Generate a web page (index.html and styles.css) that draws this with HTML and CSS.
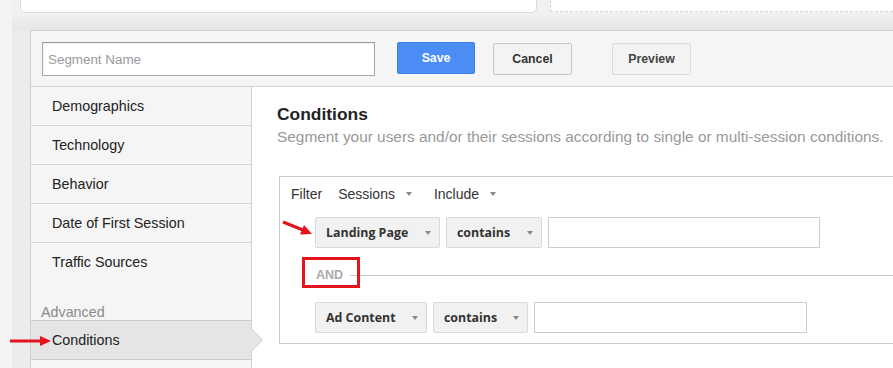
FILE: index.html
```html
<!DOCTYPE html>
<html lang="en">
<head>
    <meta charset="UTF-8">
    <meta name="viewport" content="width=device-width, initial-scale=1.0">
    <title>Segment Builder</title>
    <link rel="stylesheet" href="styles.css">
</head>
<body>

    <div class="page">
        <div class="rail"></div>
        <div class="main">
            <div class="top">
                <div class="top-card"></div>
                <div class="top-drop"></div>
            </div>

            <div class="panel">
                <div class="toolbar">
                    <input class="seg-name" type="text" placeholder="Segment Name">
                    <button class="btn btn-save">Save</button>
                    <button class="btn btn-cancel">Cancel</button>
                    <button class="btn btn-preview">Preview</button>
                </div>

                <div class="editor">
                    <ul class="side">
                        <li class="side-item">Demographics</li>
                        <li class="side-item">Technology</li>
                        <li class="side-item">Behavior</li>
                        <li class="side-item">Date of First Session</li>
                        <li class="side-item last">Traffic Sources</li>
                        <li class="side-group">Advanced</li>
                        <li class="side-item active">Conditions</li>
                        <li class="side-item"></li>
                    </ul>

                    <div class="content">
                        <h2 class="title">Conditions</h2>
                        <p class="subtitle">Segment your users and/or their sessions according to single or multi-session conditions.</p>

                        <div class="filter">
                            <div class="filter-head">
                                <span class="filter-label">Filter</span>
                                <span class="pick">Sessions <i class="caret"></i></span>
                                <span class="pick">Include <i class="caret"></i></span>
                            </div>

                            <div class="cond-row first">
                                <div class="dd dd-dim1">Landing Page <i class="caret"></i></div>
                                <div class="dd dd-op1">contains <i class="caret"></i></div>
                                <input class="val val1" type="text">
                            </div>

                            <div class="and-row">
                                <div class="and-mark">
                                    <span class="and-text">AND</span>
                                    <span class="and-dash"></span>
                                </div>
                                <div class="and-line"></div>
                            </div>

                            <div class="cond-row second">
                                <div class="dd dd-dim2">Ad Content <i class="caret"></i></div>
                                <div class="dd dd-op2">contains <i class="caret"></i></div>
                                <input class="val val2" type="text">
                            </div>
                        </div>
                    </div>
                </div>
            </div>
        </div>
    </div>

    <!-- red annotation arrows drawn over the page -->
    <svg class="marks" width="893" height="368" viewBox="0 0 893 368">
        <line x1="10" y1="341" x2="42" y2="341" stroke="#e3141c" stroke-width="3"/>
        <polygon points="40,336 51,341 40,346" fill="#e3141c"/>
        <line x1="283" y1="222" x2="303" y2="230" stroke="#e3141c" stroke-width="3"/>
        <polygon points="300,234.6 312,234 304,225" fill="#e3141c"/>
    </svg>

</body>
</html>
```

FILE: styles.css
```css
body {
    margin: 0;
    padding: 0;
    font-family: "Liberation Sans", Arial, sans-serif;
    background-color: #ececec;
    overflow: hidden;
    height: 368px;
    position: relative;
}
.page {
    display: flex;
    height: 368px;
}
.rail {
    width: 12px;
    flex: none;
    background-color: #f4f4f4;
}
.main {
    flex: 1;
    min-width: 0;
    overflow: hidden;
}
.top {
    height: 30px;
    display: flex;
    align-items: flex-start;
    background: linear-gradient(to bottom, #f1f1f1 0, #f1f1f1 14px, #e6e6e6 30px);
}
.top-card {
    margin-left: 8px;
    width: 517px;
    height: 13px;
    box-sizing: border-box;
    background-color: #fff;
    border: 1px solid #dcdcdc;
    border-top: none;
    border-radius: 0 0 5px 5px;
}
.top-drop {
    margin-left: 13px;
    flex: 1;
    height: 12px;
    box-sizing: border-box;
    background-color: #fff;
    border: 1px dashed #d6d6d6;
    border-top: none;
    border-right: none;
}
.panel {
    margin-left: 18px;
    width: 900px;
    border: 1px solid #cfcfcf;
    background-color: #fff;
}
.toolbar {
    height: 55px;
    display: flex;
    align-items: center;
    padding-left: 11px;
    background-color: #f5f5f5;
    border-bottom: 1px solid #d2d2d2;
}
.seg-name {
    width: 333px;
    height: 34px;
    box-sizing: border-box;
    margin: 1px 0 0 0;
    padding: 0 5px;
    border: 1px solid #a8a8a8;
    border-top-color: #9a9a9a;
    box-shadow: inset 0 1px 2px rgba(0, 0, 0, 0.08);
    font-family: "Liberation Sans", Arial, sans-serif;
    font-size: 13.4px;
    color: #333;
    background-color: #fff;
}
.seg-name::placeholder {
    color: #9a9a9a;
}
.btn {
    height: 32px;
    box-sizing: border-box;
    border-radius: 2px;
    font-family: "Liberation Sans", Arial, sans-serif;
    font-weight: bold;
    font-size: 12.3px;
    padding: 0;
    cursor: pointer;
}
.btn-save {
    margin-left: 22px;
    width: 78px;
    margin-top: -1px;
    background-color: #4b8df5;
    border: 1px solid #3b7de6;
    color: #fff;
}
.btn-cancel {
    margin-left: 18px;
    width: 79px;
    background-color: #f3f3f3;
    border: 1px solid #c6c6c6;
    color: #333;
}
.btn-preview {
    margin-left: 40px;
    width: 79px;
    background-color: #f3f3f3;
    border: 1px solid #dadada;
    color: #444;
}
.editor {
    display: flex;
    height: 290px;
}
.side {
    list-style: none;
    margin: 0;
    padding: 0;
    width: 220px;
    flex: none;
    background-color: #f5f5f5;
    border-right: 1px solid #cfcfcf;
}
.side-item {
    height: 38px;
    line-height: 38px;
    padding-left: 21px;
    border-bottom: 1px solid #d5d5d5;
    font-size: 14.3px;
    color: #222;
}
.side-item.last {
    border-bottom: none;
}
.side-group {
    height: 39px;
    box-sizing: border-box;
    padding: 23px 0 0 10px;
    line-height: 16px;
    font-size: 14.3px;
    color: #8a8a8a;
}
.side-item.active {
    position: relative;
    background-color: #e5e5e5;
    border-top: 1px solid #c9c9c9;
    border-bottom-color: #c9c9c9;
}
.side-item.active::before,
.side-item.active::after {
    content: "";
    position: absolute;
    top: 50%;
    left: 100%;
    width: 0;
    height: 0;
    border-style: solid;
    border-color: transparent;
}
.side-item.active::before {
    margin-top: -12px;
    border-width: 12px 0 12px 12px;
    border-left-color: #cacaca;
}
.side-item.active::after {
    margin-top: -11px;
    border-width: 11px 0 11px 11px;
    border-left-color: #e5e5e5;
}
.content {
    flex: 1;
    min-width: 0;
    padding: 17px 0 0 25px;
    background-color: #fff;
}
.title {
    margin: 0;
    font-size: 17.4px;
    line-height: 20px;
    font-weight: bold;
    color: #222;
}
.subtitle {
    margin: 3px 0 0 0;
    font-size: 15.4px;
    line-height: 20px;
    color: #999;
    white-space: nowrap;
}
.filter {
    margin: 29px 0 0 2px;
    width: 700px;
    border: 1px solid #cccccc;
    padding: 0 0 10px 11px;
}
.filter-head {
    height: 34px;
    display: flex;
    align-items: center;
    font-size: 14px;
    color: #333;
}
.filter-label {
    margin-right: 16px;
}
.pick {
    display: flex;
    align-items: center;
    margin-right: 22px;
}
.pick .caret {
    margin-left: 11px;
}
.caret {
    display: inline-block;
    width: 0;
    height: 0;
    border-style: solid;
    border-width: 4px 3.5px 0 3.5px;
    border-color: #888 transparent transparent transparent;
}
.cond-row {
    display: flex;
    margin-left: 24px;
}
.cond-row.first {
    margin-top: 6px;
    gap: 6px;
}
.cond-row.second {
    margin-top: 14px;
    gap: 6px;
}
.dd {
    height: 31px;
    box-sizing: border-box;
    display: flex;
    align-items: center;
    justify-content: space-between;
    padding: 0 8px 0 10px;
    background-color: #f1f1f1;
    border: 1px solid #dadada;
    border-radius: 2px;
    font-family: "Open Sans", "Liberation Sans", sans-serif;
    font-weight: bold;
    font-size: 12.4px;
    color: #333;
}
.dd-dim1 { width: 125px; }
.dd-op1 { width: 96px; }
.dd-dim2 { width: 112px; }
.dd-op2 { width: 95px; }
.val {
    height: 31px;
    box-sizing: border-box;
    margin: 0;
    border: 1px solid #cccccc;
    background-color: #fff;
}
.val1 { width: 272px; }
.val2 { width: 273px; }
.and-row {
    display: flex;
    margin: 9px 0 0 11px;
    height: 31px;
}
.and-mark {
    width: 58px;
    height: 31px;
    box-sizing: border-box;
    border: 3px solid #e3141c;
    padding: 4px 0 0 11px;
    display: flex;
    align-items: center;
}
.and-text {
    font-weight: bold;
    font-size: 12.5px;
    color: #aaa;
}
.and-dash {
    flex: 1;
    margin-left: 7px;
    margin-top: 1px;
    border-top: 1px solid #cccccc;
}
.and-line {
    flex: 1;
    align-self: flex-start;
    margin-top: 18px;
    border-top: 1px solid #cccccc;
}
.marks {
    position: absolute;
    top: 0;
    left: 0;
    pointer-events: none;
}
```
